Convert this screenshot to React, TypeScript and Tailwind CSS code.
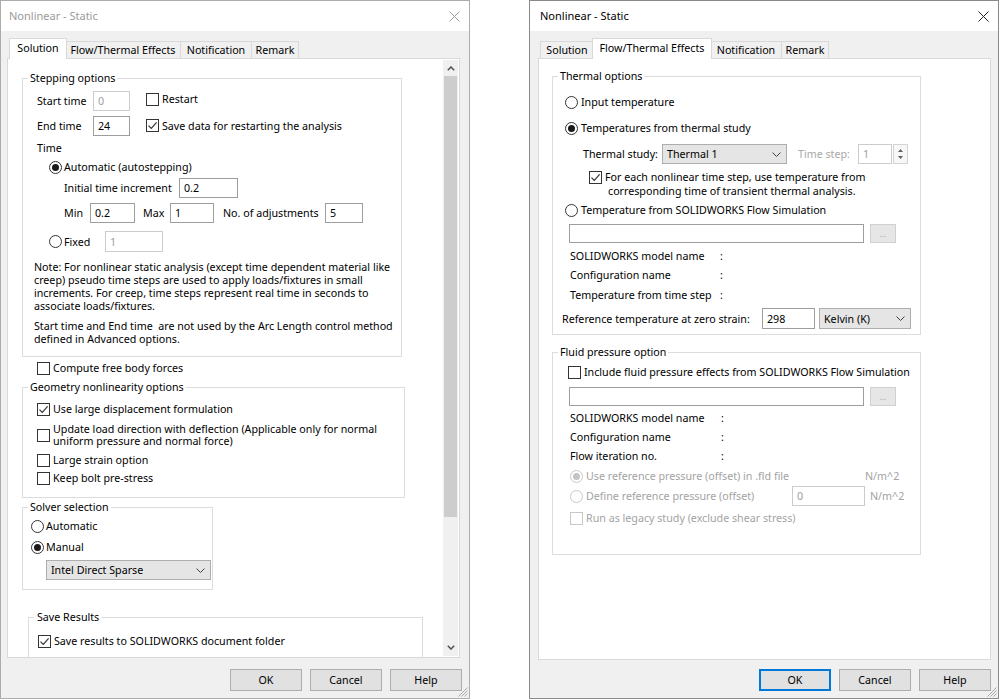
import React from "react";

function CheckMark({ color }: { color: string }) {
  return (
    <svg width="11" height="11" viewBox="0 0 11 11" className="block">
      <polyline points="1.5,5.6 4.3,8.4 9.6,2.4" fill="none" stroke={color} strokeWidth="1.2" />
    </svg>
  );
}

function Checkbox({ checked, disabled }: { checked?: boolean; disabled?: boolean }) {
  return (
    <span
      className={
        "w-[13px] h-[13px] shrink-0 bg-white border flex items-center justify-center " +
        (disabled ? "border-[#c8c8c8]" : "border-[#333333]")
      }
    >
      {checked ? <CheckMark color={disabled ? "#c8c8c8" : "#333333"} /> : null}
    </span>
  );
}

function Radio({ checked, disabled }: { checked?: boolean; disabled?: boolean }) {
  return (
    <span
      className={
        "w-[13px] h-[13px] shrink-0 rounded-full bg-white border flex items-center justify-center " +
        (disabled ? "border-[#c8c8c8]" : "border-[#333333]")
      }
    >
      {checked ? (
        <span className={"w-[7px] h-[7px] rounded-full " + (disabled ? "bg-[#c4c4c4]" : "bg-[#1a1a1a]")} />
      ) : null}
    </span>
  );
}

function Chevron() {
  return (
    <svg width="9" height="5" viewBox="0 0 9 5" className="block shrink-0">
      <polyline points="0.5,0.5 4.5,4.5 8.5,0.5" fill="none" stroke="#404040" strokeWidth="1" />
    </svg>
  );
}

function Select({ value, className }: { value: string; className: string }) {
  return (
    <div
      className={
        "shrink-0 flex items-center justify-between bg-[#e5e5e5] border border-[#adadad] pl-[4px] pr-[5px] " +
        className
      }
    >
      <span>{value}</span>
      <Chevron />
    </div>
  );
}

function Input({ value = "", disabled, className }: { value?: string; disabled?: boolean; className: string }) {
  return (
    <div
      className={
        "shrink-0 flex items-center bg-white border pl-[4px] " +
        (disabled ? "border-[#cccccc] text-[#a0a0a0] " : "border-[#9e9e9e] ") +
        className
      }
    >
      {value}
    </div>
  );
}

function DotsBtn() {
  return (
    <div className="ml-[6px] w-[26px] h-[19px] shrink-0 bg-[#e6e6e6] border border-[#d0d0d0] flex items-center justify-center text-[#a8a8a8] text-[8px] leading-[8px]">
      ...
    </div>
  );
}

function Spinner() {
  return (
    <div className="ml-[1px] w-[15px] h-[20px] shrink-0 border border-[#d4d4d4] bg-[#f7f7f7] flex flex-col items-center justify-center gap-[4px]">
      <svg width="5" height="3" viewBox="0 0 5 3" className="block">
        <polygon points="0,3 2.5,0 5,3" fill="#606060" />
      </svg>
      <svg width="5" height="3" viewBox="0 0 5 3" className="block">
        <polygon points="0,0 5,0 2.5,3" fill="#606060" />
      </svg>
    </div>
  );
}

function Btn({ label, focused }: { label: string; focused?: boolean }) {
  return (
    <div
      className={
        "w-[72px] h-[22px] flex items-center justify-center bg-[#e1e1e1] border " +
        (focused ? "border-[#0078d7] shadow-[inset_0_0_0_1px_#0078d7]" : "border-[#adadad]")
      }
    >
      {label}
    </div>
  );
}

const TAB_NAMES = ["Solution", "Flow/Thermal Effects", "Notification", "Remark"];
const TAB_W = ["w-[54px]", "w-[116px]", "w-[72px]", "w-[48px]"];
const TAB_W_ACTIVE = ["w-[58px]", "w-[120px]", "w-[76px]", "w-[52px]"];

function Tabs({ active, className }: { active: number; className: string }) {
  return (
    <div className={"flex items-end h-[20px] " + className}>
      {TAB_NAMES.map((n, i) =>
        i === active ? (
          <div
            key={n}
            className={
              "relative z-10 -mx-[2px] -mb-px h-[21px] bg-white border border-b-0 border-[#d9d9d9] flex items-center justify-center pb-[2px] " +
              TAB_W_ACTIVE[i]
            }
          >
            {n}
          </div>
        ) : (
          <div
            key={n}
            className={
              "h-[17px] bg-[#f0f0f0] border border-b-0 border-[#d9d9d9] flex items-center justify-center " +
              (i > 0 && i - 1 !== active ? "-ml-px " : "") +
              TAB_W[i]
            }
          >
            {n}
          </div>
        )
      )}
    </div>
  );
}

function CloseX({ color }: { color: string }) {
  return (
    <svg width="11" height="11" viewBox="0 0 11 11" className="block">
      <path d="M0.5 0.5 L10.5 10.5 M10.5 0.5 L0.5 10.5" stroke={color} strokeWidth="1" />
    </svg>
  );
}

function Grip() {
  return (
    <svg className="absolute right-[1px] bottom-[1px]" width="11" height="11" viewBox="0 0 11 11">
      <path d="M10.5 1.5 L1.5 10.5 M10.5 4.5 L4.5 10.5 M10.5 7.5 L7.5 10.5" stroke="#a8a8a8" strokeWidth="1" />
    </svg>
  );
}

function Shell({
  active,
  activeTab,
  tabsClass,
  titleClass,
  panelWrapClass,
  panelClass,
  buttonsClass,
  children,
}: {
  active: boolean;
  activeTab: number;
  tabsClass: string;
  titleClass: string;
  panelWrapClass: string;
  panelClass: string;
  buttonsClass: string;
  children: React.ReactNode;
}) {
  return (
    <div
      className={
        "relative w-[470px] h-[699px] shrink-0 flex flex-col bg-[#f0f0f0] border " +
        (active ? "border-[#8a8a8a]" : "border-[#acacac]")
      }
    >
      <div className={"h-[30px] shrink-0 bg-white flex items-center justify-between pr-[9px] " + titleClass}>
        <span className={"text-[11px] " + (active ? "text-black" : "text-[#9a9a9a]")}>Nonlinear - Static</span>
        <CloseX color={active ? "#222222" : "#9a9a9a"} />
      </div>
      <div className={"pt-[7px] " + panelWrapClass}>
        <Tabs active={activeTab} className={tabsClass} />
        <div className={"bg-white border border-[#d9d9d9] " + panelClass}>{children}</div>
      </div>
      <div className={"flex justify-end gap-[8px] pr-[7px] " + buttonsClass}>
        <Btn label="OK" focused={active} />
        <Btn label="Cancel" />
        <Btn label="Help" />
      </div>
      <Grip />
    </div>
  );
}

function Legend({ children, className = "" }: { children: React.ReactNode; className?: string }) {
  return <legend className={"ml-[5px] px-[2px] leading-[14px] " + className}>{children}</legend>;
}

function LeftContent() {
  return (
    <div className="flex h-full">
      <div className="flex-1 overflow-hidden pt-[12px]">
        <fieldset className="ml-[14px] w-[380px] min-w-0 border border-[#dcdcdc] pb-[10px]">
          <Legend>Stepping options</Legend>
          <div className="mt-[6px] h-[20px] flex items-center pl-[14px]">
            <span className="w-[56px]">Start time</span>
            <Input value="0" disabled className="w-[37px] h-[20px]" />
            <div className="ml-[16px] mb-[4px] flex items-center gap-[3px]">
              <Checkbox />
              <span>Restart</span>
            </div>
          </div>
          <div className="mt-[5px] h-[20px] flex items-center pl-[14px]">
            <span className="w-[56px]">End time</span>
            <Input value="24" className="w-[37px] h-[20px]" />
            <div className="ml-[16px] mb-[1px] flex items-center gap-[3px]">
              <Checkbox checked />
              <span>Save data for restarting the analysis</span>
            </div>
          </div>
          <div className="mt-[5px] h-[14px] flex items-center pl-[14px]">Time</div>
          <div className="mt-[5px] h-[14px] flex items-center pl-[26px] gap-[2px]">
            <Radio checked />
            <span>Automatic (autostepping)</span>
          </div>
          <div className="mt-[4px] h-[20px] flex items-center pl-[41px]">
            <span className="w-[115px]">Initial time increment</span>
            <Input value="0.2" className="w-[59px] h-[20px]" />
          </div>
          <div className="mt-[5px] h-[20px] flex items-center pl-[41px]">
            <span className="w-[26px]">Min</span>
            <Input value="0.2" className="w-[45px] h-[20px]" />
            <span className="ml-[8px] w-[27px]">Max</span>
            <Input value="1" className="w-[44px] h-[20px]" />
            <span className="ml-[9px] w-[102px]">No. of adjustments</span>
            <Input value="5" className="w-[38px] h-[20px]" />
          </div>
          <div className="mt-[8px] h-[21px] flex items-center pl-[26px]">
            <Radio />
            <span className="ml-[2px] w-[41px]">Fixed</span>
            <Input value="1" disabled className="w-[58px] h-[21px]" />
          </div>
          <p className="mt-[9px] pl-[11px] leading-[13px] whitespace-nowrap">
            Note: For nonlinear static analysis (except time dependent material like
            <br />
            creep) pseudo time steps are used to apply loads/fixtures in small
            <br />
            increments. For creep, time steps represent real time in seconds to
            <br />
            associate loads/fixtures.
          </p>
          <p className="mt-[7px] pl-[11px] leading-[13px] whitespace-pre">
            {"Start time and End time  are not used by the Arc Length control method\ndefined in Advanced options."}
          </p>
        </fieldset>

        <div className="mt-[4px] h-[14px] flex items-center pl-[29px] gap-[3px]">
          <Checkbox />
          <span>Compute free body forces</span>
        </div>

        <fieldset className="mt-[5px] ml-[14px] w-[383px] min-w-0 border border-[#dcdcdc] pb-[12px]">
          <Legend>Geometry nonlinearity options</Legend>
          <div className="mt-[8px] h-[14px] flex items-center pl-[14px] gap-[3px]">
            <Checkbox checked />
            <span>Use large displacement formulation</span>
          </div>
          <div className="mt-[7px] flex items-center pl-[14px] gap-[3px] leading-[12px]">
            <Checkbox />
            <span className="whitespace-nowrap">
              Update load direction with deflection (Applicable only for normal
              <br />
              uniform pressure and normal force)
            </span>
          </div>
          <div className="mt-[6px] h-[14px] flex items-center pl-[14px] gap-[3px]">
            <Checkbox />
            <span>Large strain option</span>
          </div>
          <div className="mt-[4px] h-[14px] flex items-center pl-[14px] gap-[3px]">
            <Checkbox />
            <span>Keep bolt pre-stress</span>
          </div>
        </fieldset>

        <fieldset className="mt-[2px] ml-[14px] w-[191px] min-w-0 border border-[#dcdcdc] pb-[9px]">
          <Legend>Solver selection</Legend>
          <div className="mt-[5px] h-[14px] flex items-center pl-[8px] gap-[2px]">
            <Radio />
            <span>Automatic</span>
          </div>
          <div className="mt-[7px] h-[14px] flex items-center pl-[8px] gap-[2px]">
            <Radio checked />
            <span>Manual</span>
          </div>
          <div className="mt-[6px] pl-[23px]">
            <Select value="Intel Direct Sparse" className="w-[165px] h-[20px]" />
          </div>
        </fieldset>

        <fieldset className="mt-[20px] ml-[20px] w-[395px] min-w-0 border border-[#dcdcdc] pb-[40px]">
          <Legend className="px-[3px]">Save Results</Legend>
          <div className="mt-[10px] h-[14px] flex items-center pl-[9px] gap-[3px]">
            <Checkbox checked />
            <span>Save results to SOLIDWORKS document folder</span>
          </div>
        </fieldset>
      </div>

      <div className="w-[15px] mr-[1px] my-[1px] shrink-0 bg-[#f0f0f0] flex flex-col">
        <div className="h-[16px] flex items-center justify-center">
          <svg width="8" height="5" viewBox="0 0 8 5" className="block">
            <polyline points="0.8,4.2 4,1 7.2,4.2" fill="none" stroke="#505050" strokeWidth="1.5" />
          </svg>
        </div>
        <div className="h-[441px] mx-[1px] bg-[#cdcdcd]" />
        <div className="flex-1" />
        <div className="h-[18px] flex items-center justify-center">
          <svg width="8" height="5" viewBox="0 0 8 5" className="block">
            <polyline points="0.8,0.8 4,4 7.2,0.8" fill="none" stroke="#505050" strokeWidth="1.5" />
          </svg>
        </div>
      </div>
    </div>
  );
}

function InfoRow({ label, mt, w }: { label: string; mt: string; w: string }) {
  return (
    <div className={"h-[14px] flex items-center pl-[17px] " + mt}>
      <span className={w}>{label}</span>
      <span>:</span>
    </div>
  );
}

function RightContent() {
  return (
    <div className="pt-[10px]">
      <fieldset className="ml-[13px] w-[369px] min-w-0 border border-[#dcdcdc] pb-[5px]">
        <Legend>Thermal options</Legend>
        <div className="mt-[12px] h-[14px] flex items-center pl-[12px] gap-[3px]">
          <Radio />
          <span>Input temperature</span>
        </div>
        <div className="mt-[12px] h-[14px] flex items-center pl-[12px] gap-[3px]">
          <Radio checked />
          <span>Temperatures from thermal study</span>
        </div>
        <div className="mt-[9px] h-[20px] flex items-center pl-[30px]">
          <span className="w-[79px]">Thermal study:</span>
          <Select value="Thermal 1" className="w-[125px] h-[20px]" />
          <span className="ml-[11px] w-[60px] text-[#a8a8a8]">Time step:</span>
          <Input value="1" disabled className="w-[34px] h-[20px]" />
          <Spinner />
        </div>
        <div className="mt-[6px] flex items-start pl-[36px] gap-[3px] leading-[14px]">
          <span className="mt-[1px]">
            <Checkbox checked />
          </span>
          <span className="whitespace-nowrap">
            For each nonlinear time step, use temperature from
            <br />
            <span className="pl-[3px]">corresponding time of transient thermal analysis.</span>
          </span>
        </div>
        <div className="mt-[5px] h-[14px] flex items-center pl-[12px] gap-[3px]">
          <Radio />
          <span>Temperature from SOLIDWORKS Flow Simulation</span>
        </div>
        <div className="mt-[7px] h-[19px] flex items-center pl-[16px]">
          <Input className="w-[295px] h-[19px]" />
          <DotsBtn />
        </div>
        <InfoRow label="SOLIDWORKS model name" mt="mt-[6px]" w="w-[150px]" />
        <InfoRow label="Configuration name" mt="mt-[5px]" w="w-[150px]" />
        <InfoRow label="Temperature from time step" mt="mt-[6px]" w="w-[150px]" />
        <div className="mt-[6px] h-[21px] flex items-center pl-[9px]">
          <span className="w-[200px]">Reference temperature at zero strain:</span>
          <Input value="298" className="w-[53px] h-[21px]" />
          <div className="ml-[4px]">
            <Select value="Kelvin (K)" className="w-[92px] h-[21px]" />
          </div>
        </div>
      </fieldset>

      <fieldset className="mt-[10px] ml-[13px] w-[369px] min-w-0 border border-[#dcdcdc] pb-[29px]">
        <Legend>Fluid pressure option</Legend>
        <div className="mt-[6px] h-[14px] flex items-center pl-[15px] gap-[3px]">
          <Checkbox />
          <span>Include fluid pressure effects from SOLIDWORKS Flow Simulation</span>
        </div>
        <div className="mt-[8px] h-[19px] flex items-center pl-[16px]">
          <Input className="w-[295px] h-[19px]" />
          <DotsBtn />
        </div>
        <InfoRow label="SOLIDWORKS model name" mt="mt-[5px]" w="w-[151px]" />
        <InfoRow label="Configuration name" mt="mt-[5px]" w="w-[151px]" />
        <InfoRow label="Flow iteration no." mt="mt-[5px]" w="w-[151px]" />
        <div className="mt-[6px] h-[14px] flex items-center pl-[17px] text-[#a3a3a3]">
          <Radio checked disabled />
          <span className="ml-[3px] w-[279px]">Use reference pressure (offset) in .fld file</span>
          <span>N/m^2</span>
        </div>
        <div className="mt-[3px] h-[20px] flex items-center pl-[17px] text-[#a3a3a3]">
          <Radio disabled />
          <span className="ml-[3px] w-[206px]">Define reference pressure (offset)</span>
          <Input value="0" disabled className="w-[73px] h-[20px] text-[#7a7a7a]" />
          <span className="ml-[5px]">N/m^2</span>
        </div>
        <div className="mt-[5px] h-[14px] flex items-center pl-[17px] gap-[3px] text-[#a3a3a3]">
          <Checkbox disabled />
          <span>Run as legacy study (exclude shear stress)</span>
        </div>
      </fieldset>
    </div>
  );
}

export default function App() {
  return (
    <div className="w-[1000px] h-[699px] bg-white flex overflow-hidden font-['Noto_Sans',sans-serif] text-[10.7px] leading-[14px] text-black">
      <Shell
        active={false}
        activeTab={0}
        tabsClass="ml-[4px]"
        titleClass="pl-[8px]"
        panelWrapClass="ml-[6px] w-[453px]"
        panelClass="h-[600px]"
        buttonsClass="mt-[11px]"
      >
        <LeftContent />
      </Shell>
      <div className="w-[59px] shrink-0" />
      <Shell
        active={true}
        activeTab={1}
        tabsClass="ml-[2px]"
        titleClass="pl-[10px]"
        panelWrapClass="ml-[8px] w-[453px]"
        panelClass="h-[602px]"
        buttonsClass="mt-[9px]"
      >
        <RightContent />
      </Shell>
    </div>
  );
}
